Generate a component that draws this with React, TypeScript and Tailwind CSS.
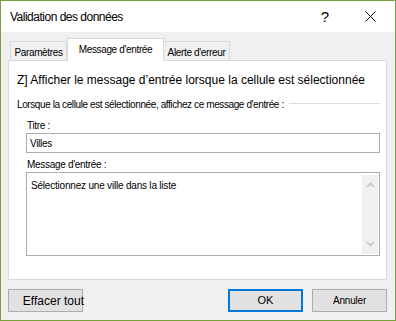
const tabs = [
  { label: 'Paramètres', active: false, w: 'w-[57px]' },
  { label: "Message d'entrée", active: true, w: 'w-[97px]' },
  { label: "Alerte d'erreur", active: false, w: 'w-[67px]' },
];

function Chevron({ up }: { up?: boolean }) {
  return (
    <svg width="9" height="6" viewBox="0 0 9 6" className="block">
      <polyline
        points={up ? '1,5 4.5,1.5 8,5' : '1,1 4.5,4.5 8,1'}
        fill="none"
        stroke="#c4c4c4"
        strokeWidth="1.6"
      />
    </svg>
  );
}

export default function App() {
  return (
    <div className="w-[396px] h-[321px] border border-[#78a03a] bg-[#f0f0f0] flex flex-col font-['Liberation_Sans',Arial,sans-serif] text-black overflow-hidden">
      {/* title bar */}
      <div className="h-[31px] bg-white flex items-center shrink-0">
        <span className="ml-[9px] text-[12px] tracking-[-0.5px] leading-none">Validation des données</span>
        <span className="ml-auto text-[15px] leading-none font-light mr-[36px]">?</span>
        <svg width="11" height="11" viewBox="0 0 11 11" className="mr-[19px]">
          <path d="M0.5 0.5 L10.5 10.5 M10.5 0.5 L0.5 10.5" stroke="#111" strokeWidth="1" />
        </svg>
      </div>

      <div className="flex-1 flex flex-col pl-[7px]">
        {/* tabs */}
        <div className="flex items-end pl-[2px] mt-[7px] h-[22px] relative z-10 -mb-px">
          {tabs.map((tab) =>
            tab.active ? (
              <div
                key={tab.label}
                className={`${tab.w} h-[23px] bg-white border border-b-0 border-[#d9d9d9] text-[10px] tracking-[-0.35px] whitespace-nowrap flex items-center justify-center pb-[1px]`}
              >
                {tab.label}
              </div>
            ) : (
              <div
                key={tab.label}
                className={`${tab.w} h-[20px] border border-b-0 border-[#d9d9d9] text-[10px] tracking-[-0.35px] whitespace-nowrap flex items-center justify-center pt-[2px] -ml-px first:ml-0`}
              >
                {tab.label}
              </div>
            )
          )}
        </div>

        {/* panel */}
        <div className="w-[379px] h-[220px] bg-white border border-[#d9d9d9] flex flex-col">
          <div className="mt-[11px] ml-[8px] h-[16px] leading-[16px] text-[12px] whitespace-nowrap">
            Z] Afficher le message d’entrée lorsque la cellule est sélectionnée
          </div>
          <div className="mt-[10px] ml-[8px] mr-[6px] h-[14px] flex items-start">
            <span className="text-[10px] tracking-[-0.4px] leading-[14px] whitespace-nowrap">
              Lorsque la cellule est sélectionnée, affichez ce message d'entrée :
            </span>
            <div className="flex-1 h-px bg-[#dcdcdc] mt-[5px] ml-[5px]" />
          </div>
          <div className="mt-[7px] ml-[18px] h-[14px] text-[10px] tracking-[-0.3px] leading-[14px]">Titre :</div>
          <div className="ml-[17px] w-[354px] h-[20px] border border-[#adadad] flex items-center pl-[3px] text-[10px] tracking-[-0.3px]">
            Villes
          </div>
          <div className="mt-[5px] ml-[18px] h-[14px] text-[10px] tracking-[-0.3px] leading-[14px]">Message d'entrée :</div>
          <div className="ml-[17px] w-[354px] h-[84px] border border-[#adadad] flex">
            <div className="flex-1 pl-[4px] pt-[6px] text-[10px] tracking-[-0.2px] leading-[14px]">
              Sélectionnez une ville dans la liste
            </div>
            <div className="w-[16px] mt-[2px] mb-[1px] mr-[1px] bg-[#f0f0f0] flex flex-col items-center justify-between py-[7px]">
              <Chevron up />
              <Chevron />
            </div>
          </div>
        </div>

        {/* buttons */}
        <div className="flex mt-[9px] h-[23px]">
          <div className="w-[75px] h-[23px] bg-[#e1e1e1] border border-[#adadad] flex items-center justify-end text-[12px] whitespace-nowrap overflow-visible">
            <span className="-mr-[2px]">Effacer tout</span>
          </div>
          <div className="ml-auto w-[75px] h-[23px] bg-[#e1e1e1] border-2 border-[#0078d7] flex items-center justify-center text-[11px]">
            OK
          </div>
          <div className="ml-[9px] mr-[8px] w-[75px] h-[23px] bg-[#e1e1e1] border border-[#adadad] flex items-center justify-center text-[10px] tracking-[-0.2px]">
            Annuler
          </div>
        </div>
      </div>
    </div>
  );
}
